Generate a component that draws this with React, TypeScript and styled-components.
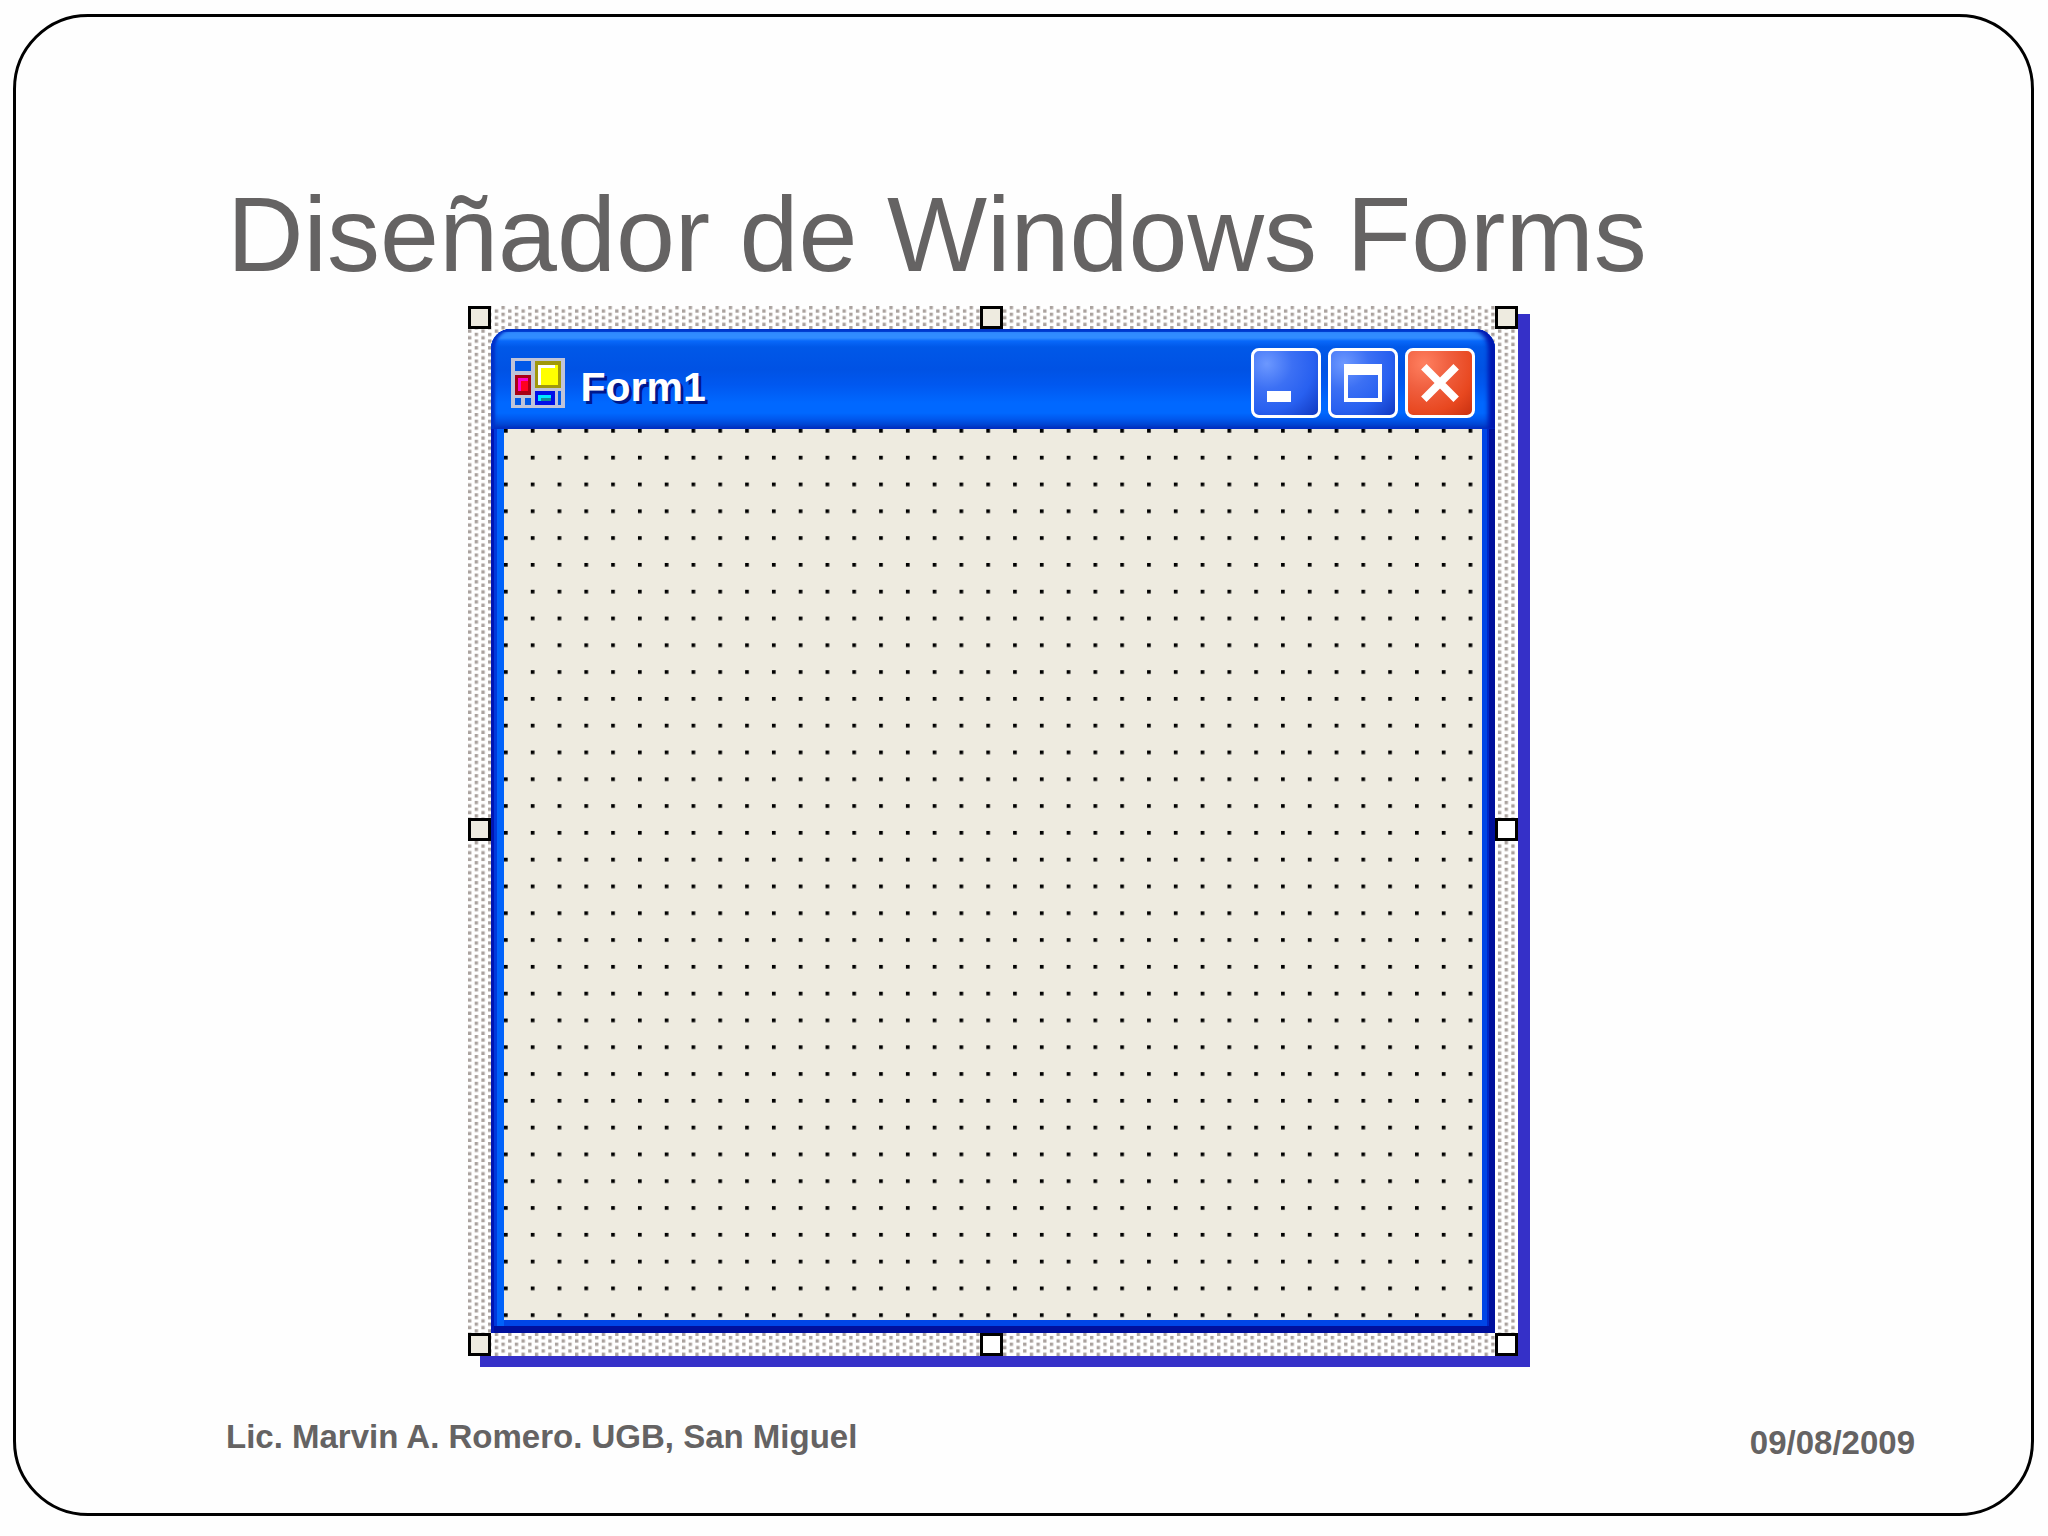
import React from 'react';
import styled, { createGlobalStyle } from 'styled-components';

const sans = `'Liberation Sans', Arial, sans-serif`;

const GlobalStyle = createGlobalStyle`
  * { box-sizing: border-box; }
  body { margin: 0; background: #fefefe; font-family: ${sans}; }
`;

const Page = styled.div`
  display: flex;
  min-height: 100vh;
  padding: 14px 14px 20px 13px;
`;

const Slide = styled.main`
  flex: 1;
  display: flex;
  flex-direction: column;
  border: 3px solid #000;
  border-radius: 75px;
`;

const Title = styled.h1`
  margin: 0;
  padding: 157px 118px 0 211px;
  font-size: 106px;
  line-height: 120px;
  font-weight: 400;
  color: #656363;
`;

const Stage = styled.section`
  display: flex;
  justify-content: center;
  padding: 12px 62px 0 0;
`;

const Designer = styled.div`
  position: relative;
  display: flex;
  width: 1050px;
  max-width: 100%;
  aspect-ratio: 1;
  padding: 23px;
  background: #fff;
  box-shadow: 12px 11px 0 #3530c8, 12px 8px 0 #3530c8;
`;

const Hatch = styled.svg`
  position: absolute;
  inset: 0;
  width: 100%;
  height: 100%;
`;

const Handle = styled.span<{ $x: string; $y: string; $fill: string }>`
  position: absolute;
  left: ${(p) => p.$x};
  top: ${(p) => p.$y};
  width: 23px;
  height: 23px;
  border: 3px solid #000;
  background: ${(p) => p.$fill};
`;

const Window = styled.article`
  position: relative;
  flex: 1;
  display: flex;
  flex-direction: column;
  padding: 0 13px 13px;
  border-radius: 20px 20px 0 0;
  background: #0046e6;
  box-shadow:
    inset 3px 0 0 #0016b4,
    inset -6px 0 0 #00109c,
    inset 0 -7px 0 #00109c,
    inset 6px 0 0 #0038dc,
    inset -8px 0 0 #0028c8,
    inset 13px 0 0 #0062fa;
`;

const TitleBar = styled.header`
  display: flex;
  align-items: center;
  gap: 16px;
  height: 100px;
  margin: 0 -13px;
  padding: 8px 20px 0;
  border-radius: 20px 20px 0 0;
  background: linear-gradient(
    #0048d8 0, #0048d8 3px, #308cff 3px, #308cff 9px, #0868fa 12px,
    #0058e8 18px, #0052e4 40px, #0058f0 56px, #0068ff 74px, #0068ff 84px,
    #0058ee 90px, #0040cc 97px, #003cc8 100px
  );
  box-shadow: inset 4px 0 3px #0030c8, inset -7px 0 4px #0018b0;
`;

const FormName = styled.h2`
  flex: 1;
  margin: 0;
  padding: 8px 0 0;
  font: 700 41px/48px ${sans};
  color: #fff;
  text-shadow: 3px 3px 0 #00188c;
`;

const Controls = styled.div`
  display: flex;
  gap: 7px;
`;

const Control = styled.button<{ $danger?: boolean }>`
  display: flex;
  width: 70px;
  height: 70px;
  padding: 0;
  border: 3px solid #fff;
  border-radius: 8px;
  background: ${(p) =>
    p.$danger
      ? 'radial-gradient(circle at 25% 20%, #ff8060 0, #f06040 35%, #e84820 70%, #c83010 100%)'
      : 'radial-gradient(circle at 20% 20%, #6c98ff 0, #3c70f4 35%, #2860f0 65%, #1038c0 100%)'};
`;

const Glyph = styled.svg`
  width: 100%;
  height: 100%;
`;

const Logo = styled.svg`
  width: 54px;
  height: 50px;
`;

const Surface = styled.svg`
  flex: 1;
  width: 100%;
  min-height: 0;
  background: #eeebe0;
`;

const Footer = styled.footer`
  display: flex;
  justify-content: space-between;
  padding: 57px 116px 0 210px;
  font: 700 33px/48px ${sans};
  color: #656363;
`;

const Author = styled.span``;

const Day = styled.time`
  padding-top: 6px;
`;

const cream = '#eeebe0';
const white = '#fff';
const handles = [
  { x: '0', y: '0', fill: cream },
  { x: '512px', y: '0', fill: cream },
  { x: 'calc(100% - 23px)', y: '0', fill: cream },
  { x: '0', y: '512px', fill: cream },
  { x: 'calc(100% - 23px)', y: '512px', fill: white },
  { x: '0', y: 'calc(100% - 23px)', fill: cream },
  { x: '512px', y: 'calc(100% - 23px)', fill: white },
  { x: 'calc(100% - 23px)', y: 'calc(100% - 23px)', fill: white },
];

const FormLogo = () => (
  <Logo viewBox="0 0 16 15" shapeRendering="crispEdges" aria-hidden="true">
    <path fill="#c0c4d8" d="M0 0h16v15H0z" />
    <path fill="#0058e8" d="M1 1h5v3H1zM1 12h2v2H1zM4 12h2v2H4zM14 10h1v4h-1z" />
    <path fill="#a0980c" d="M7 1h8v8H7z" />
    <path fill="#ff0" d="M8 2h6v6H8z" />
    <path fill="#fff" d="M8 2h5v1H9v5H8z" />
    <path fill="#a80014" d="M1 5h5v6H1z" />
    <path fill="#ff0020" d="M2 6h3v4H2z" />
    <path fill="#ff00c8" d="M2 6h3v1H3v3H2z" />
    <path fill="#0010e8" d="M7 10h6v4H7z" />
    <path fill="#00e8ff" d="M8 11h4v2H8z" />
    <path fill="#108c98" d="M9 12h3v1H9z" />
  </Logo>
);

export default function App() {
  return (
    <>
      <GlobalStyle />
      <Page>
        <Slide>
          <Title>Diseñador de Windows Forms</Title>
          <Stage>
            <Designer>
              <Hatch viewBox="0 0 314 314" aria-hidden="true">
                <defs>
                  <pattern id="hatch" width="4" height="2" patternUnits="userSpaceOnUse">
                    <path fill="#aaa29e" d="M0 1h1v1H0zM2 0h1v1H2z" />
                  </pattern>
                </defs>
                <path fill="url(#hatch)" d="M0 0h314v314H0z" />
              </Hatch>
              <Window>
                <TitleBar>
                  <FormLogo />
                  <FormName>Form1</FormName>
                  <Controls>
                    <Control type="button" aria-label="Minimizar">
                      <Glyph viewBox="0 0 19 19" shapeRendering="crispEdges">
                        <path fill="#fff" d="M4 12h7v3H4z" />
                      </Glyph>
                    </Control>
                    <Control type="button" aria-label="Maximizar">
                      <Glyph viewBox="0 0 19 19" shapeRendering="crispEdges">
                        <path fill="#fff" fillRule="evenodd" d="M4 4h11v11H4zM5 7v7h9V7z" />
                      </Glyph>
                    </Control>
                    <Control type="button" aria-label="Cerrar" $danger>
                      <Glyph viewBox="0 0 19 19">
                        <path stroke="#fff" strokeWidth="2.3" d="M4.7 4.7l9.6 9.6M14.3 4.7l-9.6 9.6" />
                      </Glyph>
                    </Control>
                  </Controls>
                </TitleBar>
                <Surface viewBox="0 0 292 266" preserveAspectRatio="none" aria-hidden="true">
                  <defs>
                    <pattern id="grid" width="8" height="8" patternUnits="userSpaceOnUse">
                      <path d="M0 0h1.1v1.1H0z" />
                    </pattern>
                  </defs>
                  <path fill="url(#grid)" d="M0 0h292v266H0z" />
                </Surface>
              </Window>
              {handles.map((h) => (
                <Handle key={h.x + h.y} $x={h.x} $y={h.y} $fill={h.fill} />
              ))}
            </Designer>
          </Stage>
          <Footer>
            <Author>Lic. Marvin A. Romero. UGB, San Miguel</Author>
            <Day dateTime="2009-08-09">09/08/2009</Day>
          </Footer>
        </Slide>
      </Page>
    </>
  );
}
